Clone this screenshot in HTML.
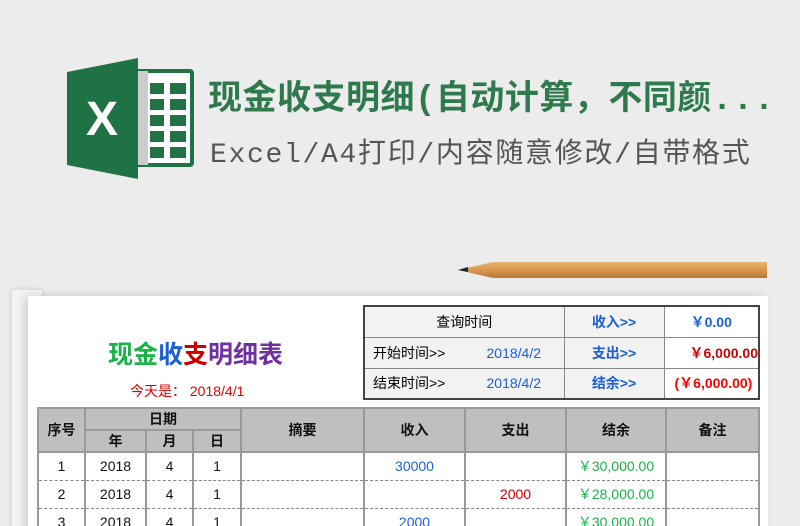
<!DOCTYPE html>
<html><head><meta charset="utf-8"><style>
*{margin:0;padding:0;box-sizing:border-box}
html,body{width:800px;height:526px;overflow:hidden}
body{background:#ececec;font-family:"Liberation Sans","Noto Sans CJK SC",sans-serif;position:relative}
.a{position:absolute}
.t1{left:208px;top:70px;font-size:34px;font-weight:bold;color:#2f7a4d;white-space:nowrap;letter-spacing:0.5px;font-family:"Liberation Mono","Noto Sans CJK SC",monospace}
.t2{left:210px;top:131px;font-size:28px;color:#555;white-space:nowrap;letter-spacing:1.7px;font-family:"Liberation Mono","Noto Sans CJK SC",monospace}
.paper{left:28px;top:296px;width:740px;height:240px;background:#fff;box-shadow:-4px 0 8px rgba(0,0,0,.15)}
.back{left:12px;top:290px;width:30px;height:240px;background:#f4f4f4;box-shadow:0 0 6px rgba(0,0,0,.15)}
table{border-collapse:collapse;position:absolute;font-size:14px;table-layout:fixed}
td{text-align:center;vertical-align:middle;white-space:nowrap;overflow:hidden}
.q td{border:1px solid #888;background:#f2f2f2;height:31px}
.q{left:363px;top:305px;width:397px;border:2px solid #444}
.m td{border-left:2px solid #999;border-right:2px solid #999;border-bottom:1px dashed #888;height:28px;color:#111}
.m .h td{background:#bfbfbf;font-weight:bold;border:2px solid #999;height:22px}
.m{left:37px;top:407px;width:723px;border-top:2px solid #888}
td.bl{color:#1a5fd6}td.rd{color:#c00}td.gr{color:#1ab34a}
</style></head><body>
<svg class="a" style="left:60px;top:55px" width="140" height="130">
<rect x="76" y="16" width="56" height="94" fill="#fff" stroke="#217346" stroke-width="4" rx="2"/>
<rect x="76" y="16" width="12" height="94" fill="#ccc"/>
<g fill="#217346">
<rect x="90" y="28" width="14" height="11"/><rect x="110" y="28" width="16" height="11"/>
<rect x="90" y="44" width="14" height="11"/><rect x="110" y="44" width="16" height="11"/>
<rect x="90" y="60" width="14" height="11"/><rect x="110" y="60" width="16" height="11"/>
<rect x="90" y="76" width="14" height="11"/><rect x="110" y="76" width="16" height="11"/>
<rect x="90" y="92" width="14" height="11"/><rect x="110" y="92" width="16" height="11"/>
</g>
<polygon points="7,17 78,3 78,124 7,110" fill="#1f7244"/>
<text x="42" y="80" font-size="48" font-weight="bold" fill="#fff" text-anchor="middle" font-family="Liberation Sans">X</text>
</svg>
<div class="a t1">现金收支明细(自动计算，不同颜...</div>
<div class="a t2">Excel/A4打印/内容随意修改/自带格式</div>
<svg class="a" style="left:455px;top:258px" width="315" height="28">
<defs><linearGradient id="g" x1="0" y1="0" x2="0" y2="1"><stop offset="0" stop-color="#e9b470"/><stop offset=".5" stop-color="#d9974c"/><stop offset="1" stop-color="#b8773a"/></linearGradient></defs>
<polygon points="3,12 38,4 312,4 312,20 38,20" fill="url(#g)"/>
<polygon points="3,12 13,9 13,14" fill="#222"/>
</svg>
<div class="a back"></div>
<div class="a paper"></div>
<div class="a" style="left:108px;top:335px;font-size:25px;font-weight:bold;white-space:nowrap"><span style="color:#1ab34a">现金</span><span style="color:#1a5fd6">收</span><span style="color:#c00">支</span><span style="color:#7030a0">明细表</span></div>
<div class="a" style="left:130px;top:381px;font-size:14px;color:#d00;white-space:nowrap">今天是： 2018/4/1</div>
<table class="a q">
<colgroup><col style="width:100px"><col style="width:100px"><col style="width:100px"><col></colgroup>
<tr><td colspan="2" style="border-bottom:1px dashed #666">查询时间</td><td class="bl" style="font-weight:bold">收入&gt;&gt;</td><td class="bl" style="background:#fff;font-weight:bold">￥0.00</td></tr>
<tr><td style="border-right:none;text-align:left;padding-left:8px;border-bottom:1px dashed #666">开始时间&gt;&gt;</td><td class="bl" style="border-left:none;border-bottom:1px dashed #666">2018/4/2</td><td class="bl" style="font-weight:bold">支出&gt;&gt;</td><td style="background:#fff;color:#c00;font-weight:bold;text-align:right">￥6,000.00</td></tr>
<tr><td style="border-right:none;text-align:left;padding-left:8px">结束时间&gt;&gt;</td><td class="bl" style="border-left:none">2018/4/2</td><td class="bl" style="font-weight:bold">结余&gt;&gt;</td><td style="background:#fff;color:#f00;font-weight:bold;text-align:left;padding-left:10px">(￥6,000.00)</td></tr>
</table>
<table class="a m">
<colgroup><col style="width:47px"><col style="width:61px"><col style="width:47px"><col style="width:48px"><col style="width:123px"><col style="width:101px"><col style="width:101px"><col style="width:100px"><col></colgroup>
<tr class="h"><td rowspan="2">序号</td><td colspan="3">日期</td><td rowspan="2">摘要</td><td rowspan="2">收入</td><td rowspan="2">支出</td><td rowspan="2">结余</td><td rowspan="2">备注</td></tr>
<tr class="h"><td>年</td><td>月</td><td>日</td></tr>
<tr><td>1</td><td>2018</td><td>4</td><td>1</td><td></td><td class="bl">30000</td><td></td><td class="gr">￥30,000.00</td><td></td></tr>
<tr><td>2</td><td>2018</td><td>4</td><td>1</td><td></td><td></td><td class="rd">2000</td><td class="gr">￥28,000.00</td><td></td></tr>
<tr><td>3</td><td>2018</td><td>4</td><td>1</td><td></td><td class="bl">2000</td><td></td><td class="gr">￥30,000.00</td><td></td></tr>
</table>
</body></html>
